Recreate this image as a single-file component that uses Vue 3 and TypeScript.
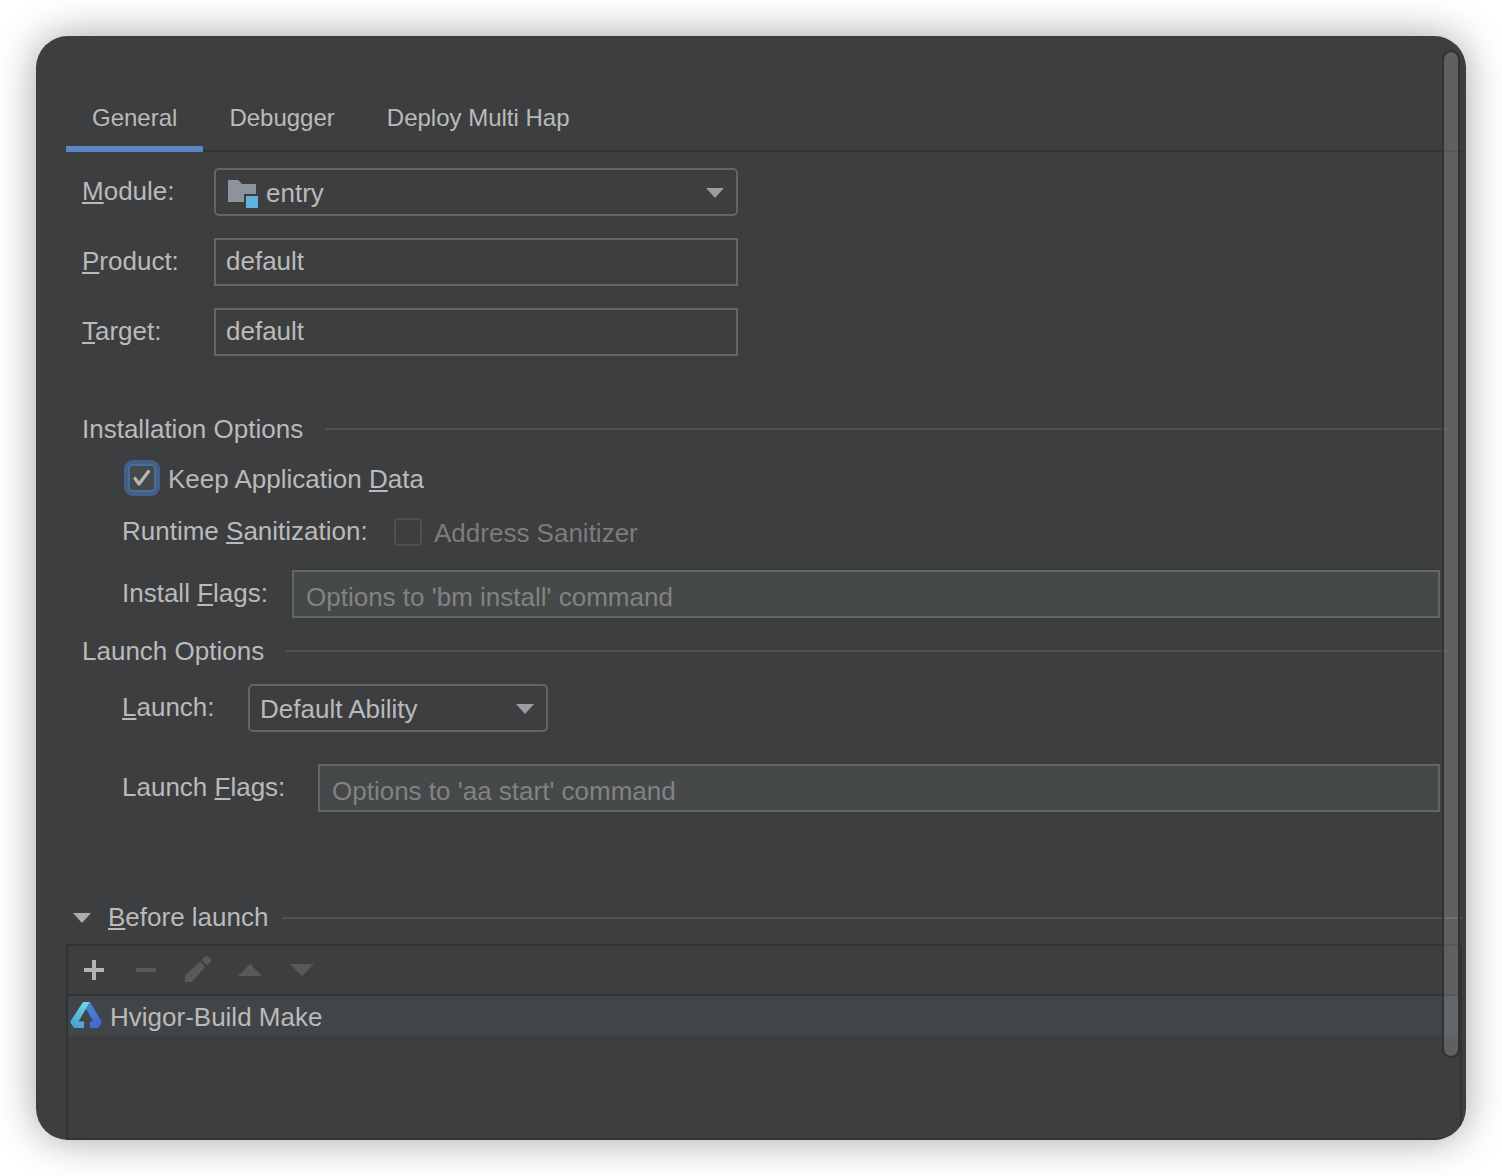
<script setup lang="ts">
import { ref } from 'vue'

const tabs: string[] = ['General', 'Debugger', 'Deploy Multi Hap']
const activeTab = ref('General')

const moduleName = ref('entry')
const product = ref('default')
const target = ref('default')
const keepData = ref(true)
const addressSanitizer = ref(false)
const installFlags = ref('')
const launchMode = ref('Default Ability')
const launchFlags = ref('')
const tasks = ref<string[]>(['Hvigor-Build Make'])
const expanded = ref(true)
</script>

<template>
  <div class="page">
    <main class="panel">
      <div class="tabs" role="tablist">
        <button
          v-for="tab in tabs"
          :key="tab"
          type="button"
          role="tab"
          class="tab"
          :class="{ active: tab === activeTab }"
          :aria-selected="tab === activeTab"
          @click="activeTab = tab"
        >{{ tab }}</button>
      </div>

      <form class="form" @submit.prevent>
        <div class="fields">
          <div class="row">
            <label class="label basic" for="module"><u>M</u>odule:</label>
            <div class="combo wide">
              <select id="module" v-model="moduleName" class="with-icon">
                <option>entry</option>
              </select>
              <svg class="folder" width="32" height="32" viewBox="0 0 32 32" aria-hidden="true">
                <path d="M2 4h9q1.500 0 2.500 1.200L16 8h14v10H18v8H2z" fill="#8b949c" />
                <path d="M20 20h12v12H20z" fill="#62b2de" />
              </svg>
              <svg class="arrow" width="18" height="10" viewBox="0 0 18 10" aria-hidden="true">
                <path d="M0 0h18L9 10z" fill="#9b9da0" />
              </svg>
            </div>
          </div>
          <div class="row">
            <label class="label basic" for="product"><u>P</u>roduct:</label>
            <input id="product" v-model="product" class="text wide" type="text" />
          </div>
          <div class="row">
            <label class="label basic" for="target"><u>T</u>arget:</label>
            <input id="target" v-model="target" class="text wide" type="text" />
          </div>
        </div>

        <h2 class="heading first">Installation Options</h2>
        <div class="group">
          <div class="row short">
            <span class="check focused">
              <input id="keep" v-model="keepData" type="checkbox" />
              <svg v-if="keepData" width="28" height="28" viewBox="0 0 28 28" aria-hidden="true">
                <path d="M7 14.500l4 5.500L20.500 7.500" fill="none" stroke="#b6b6b6" stroke-width="3.200" stroke-linecap="round" stroke-linejoin="round" />
              </svg>
            </span>
            <label class="check-label" for="keep">Keep Application <u>D</u>ata</label>
          </div>
          <div class="row short">
            <span class="label runtime">Runtime <u>S</u>anitization:</span>
            <span class="check">
              <input id="sanitizer" v-model="addressSanitizer" type="checkbox" disabled />
            </span>
            <label class="check-label off" for="sanitizer">Address Sanitizer</label>
          </div>
          <div class="row">
            <label class="label install" for="install-flags">Install <u>F</u>lags:</label>
            <input id="install-flags" v-model="installFlags" class="text flags" type="text" placeholder="Options to 'bm install' command" />
          </div>
        </div>

        <h2 class="heading">Launch Options</h2>
        <div class="group loose">
          <div class="row">
            <label class="label launch" for="launch"><u>L</u>aunch:</label>
            <div class="combo">
              <select id="launch" v-model="launchMode">
                <option>Default Ability</option>
              </select>
              <svg class="arrow" width="18" height="10" viewBox="0 0 18 10" aria-hidden="true">
                <path d="M0 0h18L9 10z" fill="#9b9da0" />
              </svg>
            </div>
          </div>
          <div class="row">
            <label class="label launch-flags" for="launch-flags">Launch <u>F</u>lags:</label>
            <input id="launch-flags" v-model="launchFlags" class="text flags" type="text" placeholder="Options to 'aa start' command" />
          </div>
        </div>
      </form>

      <section class="before">
        <button type="button" class="toggle" :aria-expanded="expanded" @click="expanded = !expanded">
          <svg width="18" height="10" viewBox="0 0 18 10" aria-hidden="true">
            <path d="M0 0h18L9 10z" fill="#adadad" />
          </svg>
          <span class="label"><u>B</u>efore launch</span>
        </button>
        <div class="list">
          <div class="toolbar">
            <button type="button" aria-label="Add">
              <svg width="28" height="28" viewBox="0 0 28 28">
                <path d="M12 4h4v8h8v4h-8v8h-4v-8H4v-4h8z" fill="#b4b4b4" />
              </svg>
            </button>
            <button type="button" aria-label="Remove" disabled>
              <svg width="28" height="28" viewBox="0 0 28 28"><path d="M4 12h20v4H4z" /></svg>
            </button>
            <button type="button" aria-label="Edit" disabled>
              <svg width="28" height="28" viewBox="0 0 28 28">
                <path d="M1 19.500L16 5.500l5.500 5.500L7.500 26H1z" />
                <path d="M17.500 4L21 .8q1.500-1.300 3 0l2.500 2.500q1.300 1.500 0 3L23 9.500z" />
              </svg>
            </button>
            <button type="button" aria-label="Move up" disabled>
              <svg width="28" height="28" viewBox="0 0 28 28"><path d="M2 20h24L14 8z" /></svg>
            </button>
            <button type="button" aria-label="Move down" disabled>
              <svg width="28" height="28" viewBox="0 0 28 28"><path d="M2 8h24L14 20z" /></svg>
            </button>
          </div>
          <ul v-if="expanded" class="tasks">
            <li v-for="task in tasks" :key="task">
              <svg width="32" height="28" viewBox="0 0 32 28" aria-hidden="true">
                <defs>
                  <linearGradient id="hv-left" x1="0.600" y1="0" x2="0.300" y2="1">
                    <stop offset="0" stop-color="#6fd6e2" />
                    <stop offset="1" stop-color="#469fd6" />
                  </linearGradient>
                  <linearGradient id="hv-right" x1="0" y1="0" x2="0.800" y2="1">
                    <stop offset="0" stop-color="#3f8ce0" />
                    <stop offset="1" stop-color="#4468cc" />
                  </linearGradient>
                </defs>
                <path d="M13 0h7L8.500 19.500H14V26H4L0 20z" fill="url(#hv-left)" />
                <path d="M20 0l12 20-4 6h-8v-6.500h3.500L16 7z" fill="url(#hv-right)" />
              </svg>
              <span class="task-name">{{ task }}</span>
            </li>
          </ul>
        </div>
      </section>

      <div class="scrollbar" aria-hidden="true"></div>
    </main>
  </div>
</template>

<style>
body {
  margin: 0;
  background: #fff;
}
</style>

<style scoped>
.page {
  box-sizing: border-box;
  display: flex;
  min-height: 100vh;
  padding: 36px;
  color: #bababa;
  font: 26px/30px "Liberation Sans", Arial, sans-serif;
}

.panel {
  position: relative;
  box-sizing: border-box;
  display: flex;
  flex: 1;
  flex-direction: column;
  min-width: 0;
  padding: 48px 4px 0 30px;
  overflow: hidden;
  border-radius: 32px;
  background: #3d3e40;
  box-shadow: 0 0 40px rgba(0, 0, 0, 0.36);
}

button,
input,
select {
  box-sizing: border-box;
  margin: 0;
  color: inherit;
  font: inherit;
}

button {
  padding: 0;
  border: 0;
  background: none;
}

u {
  text-decoration: underline;
  text-decoration-thickness: 2px;
  text-decoration-skip-ink: none;
  text-underline-offset: 2px;
}

.tabs {
  display: flex;
  box-shadow: inset 0 -2px #323334;
}

.tab {
  height: 68px;
  padding: 0 26px;
  font-size: 24px;
}

.tab.active {
  box-shadow: inset 0 -6px #5985c5;
}

.form {
  padding: 16px 16px 0;
}

.fields,
.group {
  display: flex;
  flex-direction: column;
  gap: 22px;
}

.group {
  padding: 18px 6px 18px 40px;
}

.group.loose {
  gap: 32px;
}

.row {
  display: flex;
  align-items: center;
  height: 48px;
}

.row.short {
  height: 32px;
}

.label {
  flex: none;
  padding-bottom: 2px;
  white-space: nowrap;
}

.basic {
  width: 132px;
}

.runtime {
  width: 272px;
}

.install {
  width: 170px;
}

.launch {
  width: 126px;
}

.launch-flags {
  width: 196px;
}

.text {
  height: 48px;
  padding: 0 10px 2px;
  border: 2px solid #646567;
  border-radius: 0;
  outline: 0;
  background: transparent;
}

.text.flags {
  flex: 1;
  min-width: 0;
  padding: 6px 12px 0;
  background: #45494a;
}

.text::placeholder {
  color: #828382;
  opacity: 1;
}

.combo {
  display: grid;
  box-sizing: border-box;
  width: 300px;
  height: 48px;
  align-items: center;
  border: 2px solid #646567;
  border-radius: 5px;
}

.wide {
  width: 524px;
}

.combo > * {
  grid-area: 1 / 1;
}

.combo select {
  width: 100%;
  height: 44px;
  padding: 2px 40px 0 10px;
  border: 0;
  outline: 0;
  appearance: none;
  background: transparent;
}

.combo .with-icon {
  padding-left: 50px;
}

.combo svg {
  pointer-events: none;
}

.folder {
  margin-left: 10px;
}

.arrow {
  margin: 2px 12px 0;
  justify-self: end;
}

.heading {
  display: flex;
  align-items: center;
  gap: 22px;
  margin: 0;
  font-size: 26px;
  font-weight: 400;
  white-space: nowrap;
}

.heading.first {
  margin-top: 58px;
}

.heading::after,
.toggle::after {
  flex: 1;
  height: 2px;
  background: #505153;
  content: "";
}

.check {
  display: grid;
  width: 28px;
  height: 28px;
}

.check > * {
  grid-area: 1 / 1;
}

.check input {
  width: 28px;
  height: 28px;
  border: 2px solid #505153;
  border-radius: 5px;
  appearance: none;
}

.check.focused {
  margin-left: 6px;
}

.check.focused input {
  border-color: #466d9c;
  background: #45494a;
  box-shadow: 0 0 0 4px #456087;
}

.check svg {
  position: relative;
  pointer-events: none;
}

.check-label {
  padding: 2px 0 0 12px;
  white-space: nowrap;
}

.check-label.off {
  color: #7c7c7c;
}

.before {
  display: flex;
  flex: 1;
  flex-direction: column;
  gap: 10px;
  margin-top: 72px;
}

.toggle {
  display: flex;
  align-items: center;
  height: 32px;
  padding-left: 7px;
  text-align: left;
}

.toggle .label {
  margin: 0 14px 0 17px;
}

.list {
  flex: 1;
  min-height: 160px;
  border: 2px solid #323334;
}

.toolbar {
  display: flex;
  height: 48px;
  border-bottom: 2px solid #323334;
}

.toolbar button {
  display: flex;
  align-items: center;
  justify-content: center;
  width: 52px;
}

.toolbar svg {
  fill: #58595a;
}

.tasks {
  margin: 0;
  padding: 0;
  list-style: none;
}

.tasks li {
  display: flex;
  align-items: center;
  gap: 8px;
  height: 40px;
  padding-left: 2px;
  background: #414547;
}

.task-name {
  padding-top: 2px;
}

.scrollbar {
  position: absolute;
  top: 14px;
  right: 6px;
  bottom: 82px;
  box-sizing: border-box;
  width: 18px;
  border: 2px solid #313233;
  border-radius: 9px;
  background: rgba(255, 255, 255, 0.18);
  background-clip: padding-box;
}
</style>
